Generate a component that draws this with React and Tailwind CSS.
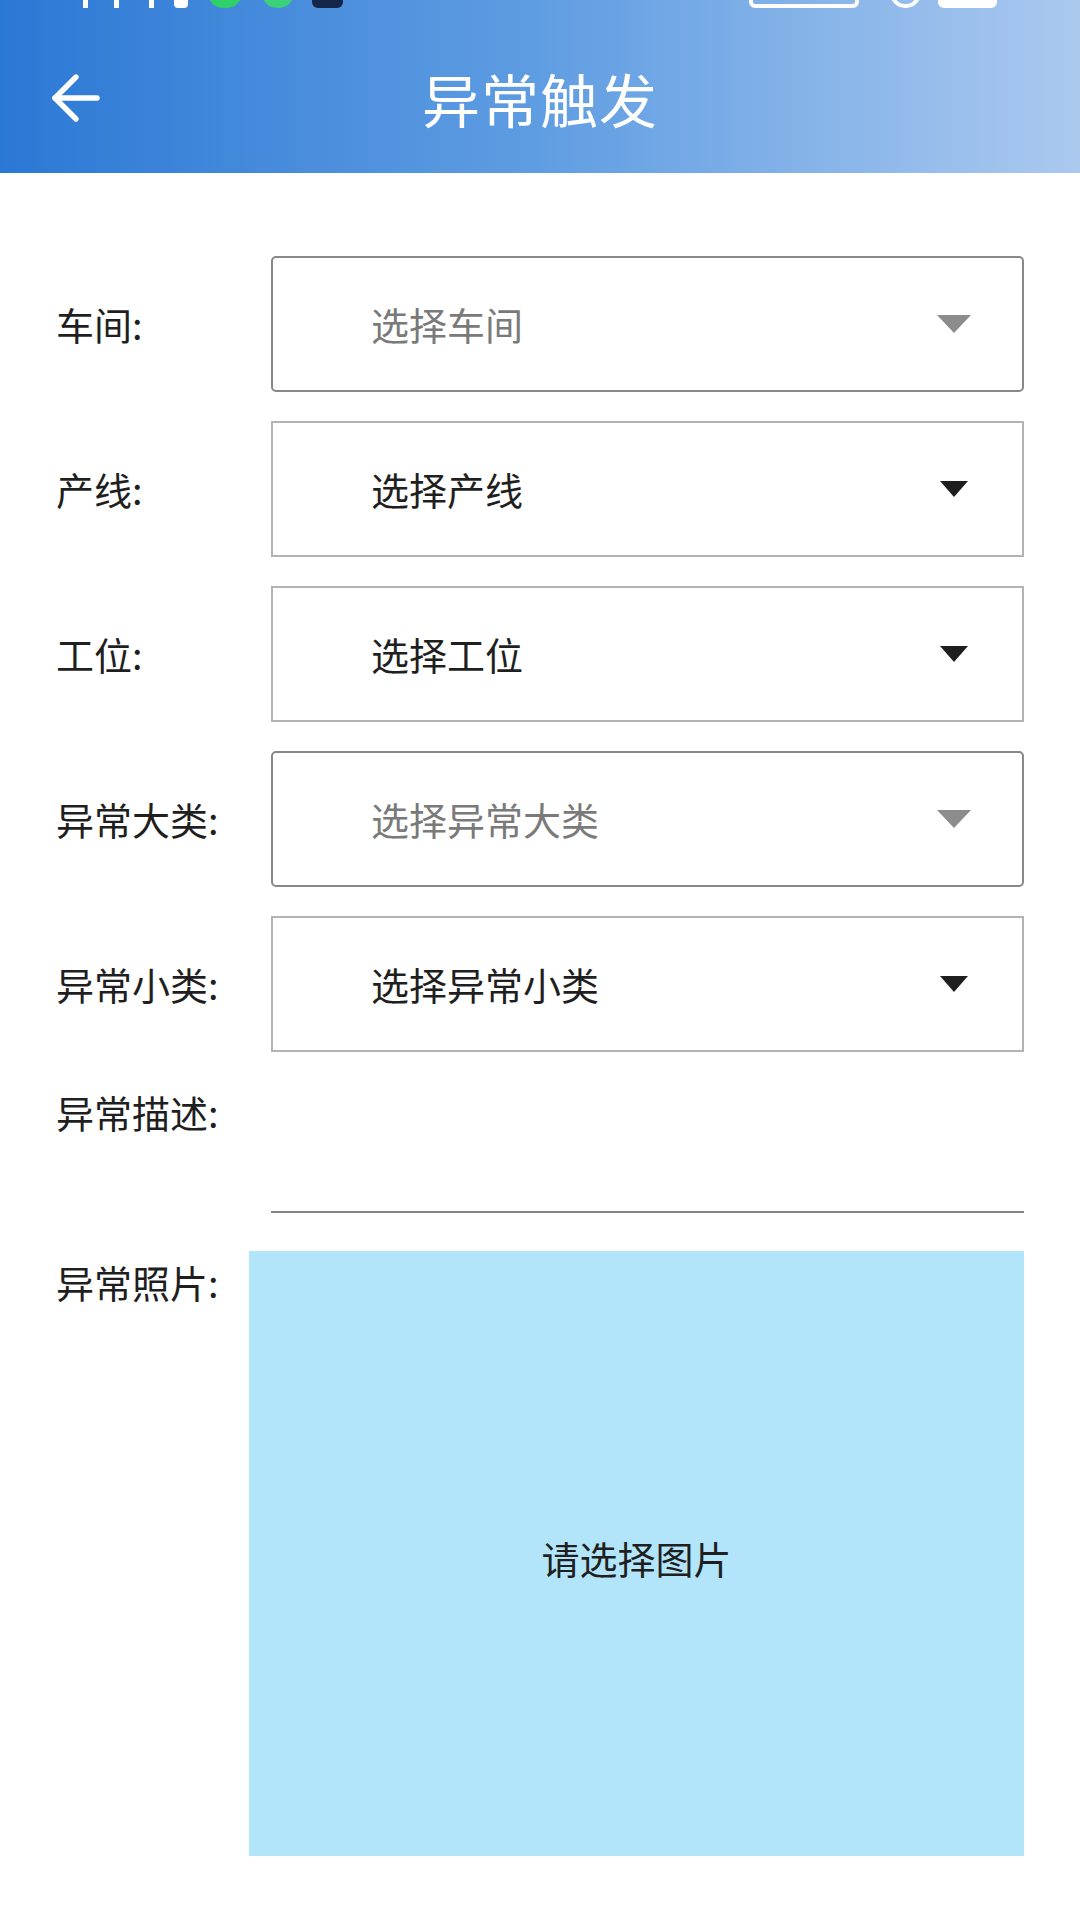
import { ArrowLeft } from "lucide-react";

const rows = [
  { label: "车间:", text: "选择车间", muted: true },
  { label: "产线:", text: "选择产线", muted: false },
  { label: "工位:", text: "选择工位", muted: false },
  { label: "异常大类:", text: "选择异常大类", muted: true },
  { label: "异常小类:", text: "选择异常小类", muted: false },
];

const Caret = ({ muted }) =>
  muted ? (
    <svg width="34" height="18" viewBox="0 0 34 18" className="mr-[51px]">
      <polygon points="0,0 34,0 17,18" fill="#8c8c8c" />
    </svg>
  ) : (
    <svg width="28" height="16" viewBox="0 0 28 16" className="mr-[54px]">
      <polygon points="0,0 28,0 14,16" fill="#1e1e1e" />
    </svg>
  );

const App = () => {
  return (
    <div
      className="w-[1080px] h-[1920px] bg-white overflow-hidden"
      style={{ fontFamily: '"Noto Sans CJK SC", "Noto Sans", sans-serif' }}
    >
      {/* header */}
      <div className="h-[173px] flex flex-col bg-gradient-to-r from-[#2a78d5] via-[#5f9de2] to-[#abc9ef]">
        {/* clipped status bar remnants */}
        <div className="h-[22px] overflow-hidden flex items-start">
          <div className="-mt-[22px] flex items-end w-full h-[30px] px-[83px]">
            <span className="w-[5px] h-[30px] bg-white" />
            <span className="ml-[26px] w-[5px] h-[30px] bg-white" />
            <span className="ml-[30px] w-[5px] h-[30px] bg-white" />
            <span className="ml-[20px] w-[14px] h-[30px] bg-white rounded-b-[4px]" />
            <span className="ml-[20px] w-[34px] h-[30px] rounded-full bg-[#2fcf6a]" />
            <span className="ml-[20px] w-[32px] h-[30px] rounded-full bg-[#3bd07a]" />
            <span className="ml-[18px] w-[31px] h-[30px] rounded-[6px] bg-[#14264a]" />
            <span className="flex-1" />
            <span className="w-[110px] h-[30px] border-[4px] border-white rounded-[6px]" />
            <span className="ml-[31px] w-[31px] h-[30px] rounded-full border-[4px] border-white" />
            <span className="ml-[17px] w-[59px] h-[30px] rounded-[6px] bg-white" />
          </div>
        </div>
        <div className="flex-1 grid grid-cols-[1fr_auto_1fr] items-center">
          <div className="pl-[40px] flex items-center">
            <ArrowLeft size={72} color="white" strokeWidth={1.8} />
          </div>
          <h1 className="text-white text-[58px] leading-[70px] tracking-[1px]">异常触发</h1>
          <div />
        </div>
      </div>

      {/* form */}
      <div className="flex flex-col pl-[56px] pt-[83px]">
        <div className="flex flex-col gap-[29px]">
          {rows.map((r) => (
            <div key={r.label} className="flex items-center">
              <div className="w-[215px] text-[38px] leading-[46px] text-[#1f1f1f]">{r.label}</div>
              <div
                className={
                  r.muted
                    ? "w-[753px] h-[136px] flex items-center justify-between border-2 border-[#888888] rounded-[5px]"
                    : "w-[753px] h-[136px] flex items-center justify-between border-2 border-[#b3b3b3]"
                }
              >
                <span
                  className={
                    r.muted
                      ? "pl-[98px] text-[38px] leading-[46px] text-[#7a7a7a]"
                      : "pl-[98px] text-[38px] leading-[46px] text-[#1f1f1f]"
                  }
                >
                  {r.text}
                </span>
                <Caret muted={r.muted} />
              </div>
            </div>
          ))}
        </div>

        <div className="flex mt-[29px]">
          <div className="w-[215px] pt-[8px] text-[38px] leading-[46px] text-[#1f1f1f]">异常描述:</div>
          <div className="w-[753px] h-[132px] border-b-2 border-[#858585]" />
        </div>

        <div className="flex mt-[38px]">
          <div className="w-[193px] pt-[8px] text-[38px] leading-[46px] text-[#1f1f1f]">异常照片:</div>
          <div className="w-[775px] h-[605px] bg-[#b3e5fa] flex items-center justify-center">
            <span className="text-[38px] leading-[46px] text-[#1f1f1f] mt-[8px]">请选择图片</span>
          </div>
        </div>
      </div>
    </div>
  );
};

export default App;
